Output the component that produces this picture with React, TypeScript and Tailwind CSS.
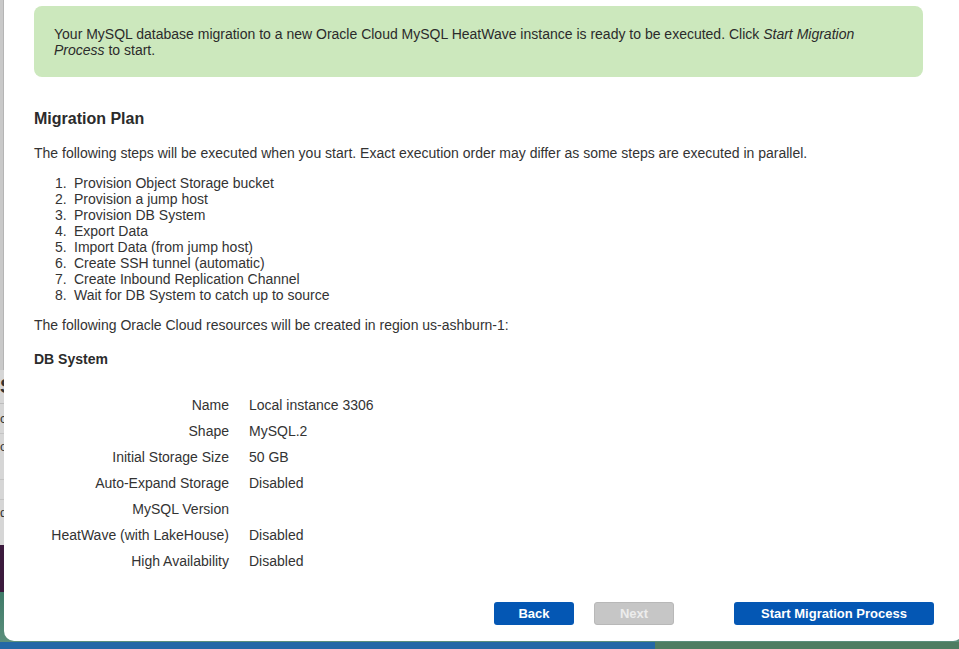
import React from "react";

const steps = [
  "Provision Object Storage bucket",
  "Provision a jump host",
  "Provision DB System",
  "Export Data",
  "Import Data (from jump host)",
  "Create SSH tunnel (automatic)",
  "Create Inbound Replication Channel",
  "Wait for DB System to catch up to source",
];

const dbSystem: [string, string][] = [
  ["Name", "Local instance 3306"],
  ["Shape", "MySQL.2"],
  ["Initial Storage Size", "50 GB"],
  ["Auto-Expand Storage", "Disabled"],
  ["MySQL Version", ""],
  ["HeatWave (with LakeHouse)", "Disabled"],
  ["High Availability", "Disabled"],
];

function Backdrop() {
  // the app behind the dialog, only slivers of it show
  return (
    <div className="flex h-full w-full flex-col">
      <div className="flex h-[370px] w-full">
        <div className="w-[3px] bg-[#c9c9c9]" />
        <div className="w-px bg-[#b5b5b5]" />
        <div className="flex-1 bg-white" />
      </div>
      <div className="flex h-[175px] flex-col bg-[#d6d6d6] text-[13px] leading-none text-[#333]">
        <div className="h-[34px] border-b border-[#bdbdbd] pt-[6px] text-[20px] font-bold">S</div>
        <div className="h-[30px] border-b border-[#c4c4c4] pt-[8px]">c</div>
        <div className="h-[46px] border-b border-[#c4c4c4] pt-[6px]">o</div>
        <div className="h-[20px] border-b border-[#c4c4c4]" />
        <div className="pt-[6px]">d</div>
      </div>
      <div className="h-[47px] bg-[#3b1a3d]" />
      <div className="flex-1 bg-gradient-to-b from-[#3f7a68] to-[#5b8f7c]" />
      <div className="flex h-[7px]">
        <div className="w-[655px] bg-[#2468a6]" />
        <div className="flex-1 bg-[#4f7d62]" />
      </div>
    </div>
  );
}

export default function App() {
  return (
    <div
      className="relative h-[649px] w-[959px] overflow-hidden bg-white"
      style={{ fontFamily: '"Liberation Sans", Arial, Helvetica, sans-serif' }}
    >
      <Backdrop />

      <div className="absolute left-[4px] right-[-4px] top-[-10px] bottom-[8px] rounded-[10px] bg-white px-[30px] pt-[16px] text-[14px] text-[#333]">
        <div className="w-[889px] rounded-[8px] bg-[#cce8bd] px-[20px] pb-[19px] pt-[20px] leading-[16px] text-[#2b2b2b]">
          Your MySQL database migration to a new Oracle Cloud MySQL HeatWave instance is ready to be executed. Click{" "}
          <i>Start Migration Process</i> to start.
        </div>

        <h2 className="mt-[32px] text-[16px] font-bold leading-[20px] text-[#2b2b2b]">Migration Plan</h2>

        <p className="mt-[16px] leading-[16px]">
          The following steps will be executed when you start. Exact execution order may differ as some steps are
          executed in parallel.
        </p>

        <ol className="mt-[14px] flex flex-col pl-[21px] leading-[16px]">
          {steps.map((s, i) => (
            <li key={s} className="flex">
              <span className="w-[19px]">{i + 1}.</span>
              <span>{s}</span>
            </li>
          ))}
        </ol>

        <p className="mt-[14px] leading-[16px]">
          The following Oracle Cloud resources will be created in region us-ashburn-1:
        </p>

        <h3 className="mt-[18px] font-bold leading-[16px] text-[#2b2b2b]">DB System</h3>

        <div className="mt-[30px] grid grid-cols-[195px_1fr] gap-x-[20px] leading-[16px]">
          {dbSystem.map(([k, v]) => (
            <React.Fragment key={k}>
              <div className="h-[26px] text-right">{k}</div>
              <div className="h-[26px]">{v}</div>
            </React.Fragment>
          ))}
        </div>

        <div className="mt-[23px] flex w-[900px] justify-end text-[13px] font-bold leading-[23px]">
          <button className="h-[23px] w-[80px] rounded-[3px] bg-[#0457b4] text-white">Back</button>
          <button className="ml-[20px] h-[23px] w-[80px] rounded-[3px] border border-[#b8b8b8] bg-[#c6c6c6] leading-[21px] text-[#ececec]">
            Next
          </button>
          <button className="ml-[60px] h-[23px] w-[200px] rounded-[3px] bg-[#0457b4] text-white">
            Start Migration Process
          </button>
        </div>
      </div>
    </div>
  );
}
